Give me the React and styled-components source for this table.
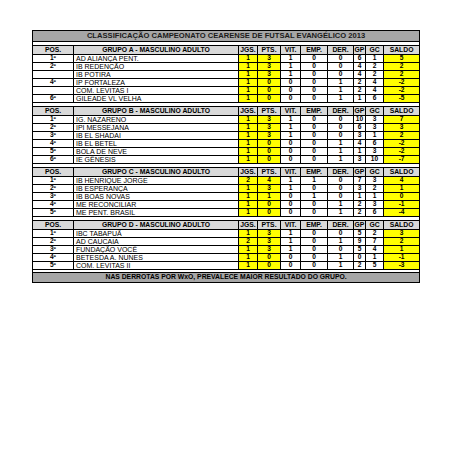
import React from "react";
import styled, { createGlobalStyle } from "styled-components";

const GlobalStyle = createGlobalStyle`
  html, body {
    margin: 0;
    padding: 0;
    background: #ffffff;
  }
  body {
    font-family: "Liberation Sans", Arial, sans-serif;
  }
`;

const groups = [
  {
    name: "GRUPO A - MASCULINO ADULTO",
    rows: [
      ["1º", "AD ALIANÇA PENT.", 1, 3, 1, 0, 0, 6, 1, 5],
      ["2º", "IB REDENÇÃO", 1, 3, 1, 0, 0, 4, 2, 2],
      ["", "IB POTIRA", 1, 3, 1, 0, 0, 4, 2, 2],
      ["4º", "IP FORTALEZA", 1, 0, 0, 0, 1, 2, 4, -2],
      ["", "COM. LEVITAS I", 1, 0, 0, 0, 1, 2, 4, -2],
      ["6º", "GILEADE VL VELHA", 1, 0, 0, 0, 1, 1, 6, -5],
    ],
  },
  {
    name: "GRUPO B - MASCULINO ADULTO",
    rows: [
      ["1º", "IG. NAZARENO", 1, 3, 1, 0, 0, 10, 3, 7],
      ["2º", "IPI MESSEJANA", 1, 3, 1, 0, 0, 6, 3, 3],
      ["3º", "IB EL SHADAI", 1, 3, 1, 0, 0, 3, 1, 2],
      ["4º", "IB EL BETEL", 1, 0, 0, 0, 1, 4, 6, -2],
      ["5º", "BOLA DE NEVE", 1, 0, 0, 0, 1, 1, 3, -2],
      ["6º", "IE GÊNESIS", 1, 0, 0, 0, 1, 3, 10, -7],
    ],
  },
  {
    name: "GRUPO C - MASCULINO ADULTO",
    rows: [
      ["1º", "IB HENRIQUE JORGE", 2, 4, 1, 1, 0, 7, 3, 4],
      ["2º", "IB ESPERANÇA", 1, 3, 1, 0, 0, 3, 2, 1],
      ["3º", "IB BOAS NOVAS", 1, 1, 0, 1, 0, 1, 1, 0],
      ["4º", "ME RECONCILIAR", 1, 0, 0, 0, 1, 2, 3, -1],
      ["5º", "ME PENT. BRASIL", 1, 0, 0, 0, 1, 2, 6, -4],
    ],
  },
  {
    name: "GRUPO D - MASCULINO ADULTO",
    rows: [
      ["1º", "IBC TABAPUÃ", 1, 3, 1, 0, 0, 5, 2, 3],
      ["2º", "AD CAUCAIA", 2, 3, 1, 0, 1, 9, 7, 2],
      ["3º", "FUNDAÇÃO VOCÊ", 1, 3, 1, 0, 0, 5, 4, 1],
      ["4º", "BETESDA A. NUNES", 1, 0, 0, 0, 1, 0, 1, -1],
      ["5º", "COM. LEVITAS II", 1, 0, 0, 0, 1, 2, 5, -3],
    ],
  },
];

const statCols = ["JGS.", "PTS.", "VIT.", "EMP.", "DER.", "GP", "GC", "SALDO"];
const yellowCols = [0, 1, 7];
const widths = [41, 165, 19, 23, 20, 27, 26, 12, 18, 36];

const Page = styled.div`
  padding: 30px 0 0 32px;
`;

const Sheet = styled.table`
  border-collapse: collapse;
  table-layout: fixed;
  width: 387px;
  border: 1px solid #000;
  font-size: 6.6px;
  font-weight: bold;
  color: #000;
  line-height: 1;
`;

const TitleCell = styled.td`
  background: #a6a6a6;
  height: 10px;
  text-align: center;
  font-size: 7.6px;
  color: #1a1a1a;
  border-bottom: 1px solid #000;
  padding: 0;
`;

const Gap = styled.td`
  height: ${(p) => p.$h}px;
  padding: 0;
  background: #fff;
  border-left: 1px solid #000;
  border-right: 1px solid #000;
`;

const HeadCell = styled.td`
  background: #d9d9d9;
  height: 8px;
  border: 1px solid #000;
  text-align: center;
  padding: 0;
  font-size: 6.8px;
`;

const Cell = styled.td`
  height: 7px;
  border: 1px solid #000;
  padding: 0;
  text-align: ${(p) => (p.$left ? "left" : "center")};
  padding-left: ${(p) => (p.$left ? "2px" : "0")};
  font-weight: ${(p) => (p.$left ? "normal" : "bold")};
  font-size: ${(p) => (p.$left ? "7px" : "6.6px")};
  background: ${(p) => (p.$yellow ? "#ffff00" : "#ffffff")};
  white-space: nowrap;
  overflow: hidden;
`;

const FootCell = styled.td`
  background: #a6a6a6;
  height: 9px;
  text-align: center;
  font-size: 6.8px;
  border-top: 1px solid #000;
  padding: 0;
`;

function Group({ group }) {
  return (
    <>
      <tr>
        <Gap colSpan={10} $h={3} />
      </tr>
      <tr>
        <HeadCell>POS.</HeadCell>
        <HeadCell>{group.name}</HeadCell>
        {statCols.map((c) => (
          <HeadCell key={c}>{c}</HeadCell>
        ))}
      </tr>
      {group.rows.map((r, i) => (
        <tr key={i}>
          <Cell>{r[0]}</Cell>
          <Cell $left>{r[1]}</Cell>
          {r.slice(2).map((v, j) => (
            <Cell key={j} $yellow={yellowCols.includes(j)}>
              {v}
            </Cell>
          ))}
        </tr>
      ))}
    </>
  );
}

export default function App() {
  return (
    <>
      <GlobalStyle />
      <Page>
        <Sheet>
          <colgroup>
            {widths.map((w, i) => (
              <col key={i} style={{ width: w }} />
            ))}
          </colgroup>
          <tbody>
            <tr>
              <TitleCell colSpan={10}>
                CLASSIFICAÇÃO CAMPEONATO CEARENSE DE FUTSAL EVANGÉLICO 2013
              </TitleCell>
            </tr>
            {groups.map((g) => (
              <Group key={g.name} group={g} />
            ))}
            <tr>
              <Gap colSpan={10} $h={2} />
            </tr>
            <tr>
              <FootCell colSpan={10}>
                NAS DERROTAS POR WxO, PREVALECE MAIOR RESULTADO DO GRUPO.
              </FootCell>
            </tr>
          </tbody>
        </Sheet>
      </Page>
    </>
  );
}
